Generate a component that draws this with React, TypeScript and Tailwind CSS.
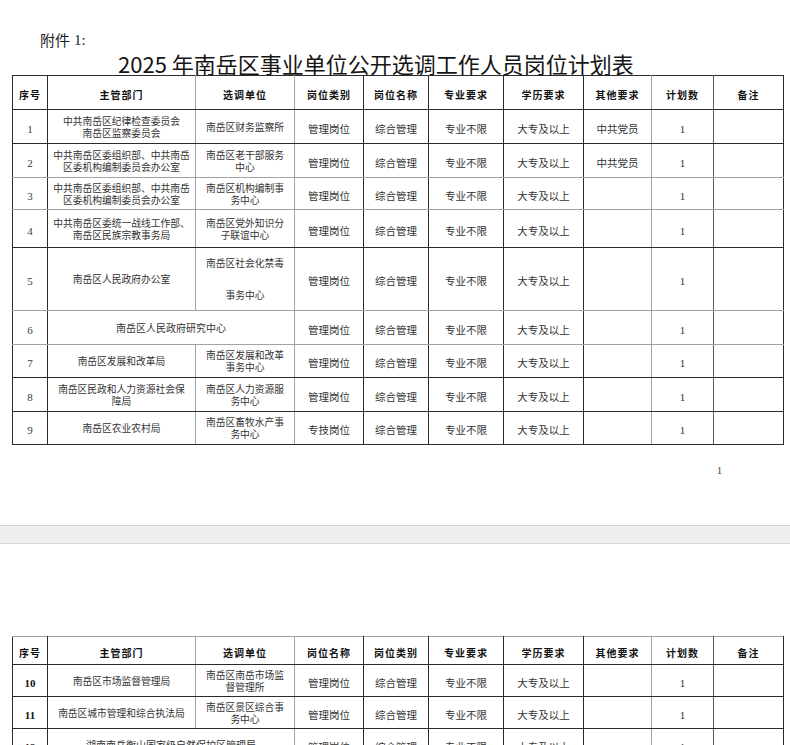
import React from "react";

type C = "d" | "g" | "m";

const RC: Record<C, string> = {
  d: "border-r-[#2b2b2b]",
  g: "border-r-[#a3a3a3]",
  m: "border-r-[#5a5a5a]",
};
const BC: Record<C, string> = {
  d: "border-b-[#2b2b2b]",
  g: "border-b-[#a3a3a3]",
  m: "border-b-[#5a5a5a]",
};
const TC: Record<C, string> = {
  d: "border-t-[#2b2b2b]",
  g: "border-t-[#a3a3a3]",
  m: "border-t-[#5a5a5a]",
};

const colRight: C[] = ["d", "g", "g", "d", "d", "d", "d", "g", "m", "d"];
const widths = [35, 148, 99, 69, 65, 75, 80, 68, 62, 70];

type Row = {
  h: string;
  b: C;
  num: string;
  bold?: boolean;
  dept: React.ReactNode;
  unit?: React.ReactNode;
  rest: string[];
};

const std = (a: string, b: string, other: string): string[] => [a, b, "专业不限", "大专及以上", other, "1", ""];

const rows1: Row[] = [
  { h: "h-[34px]", b: "d", num: "1", dept: <>中共南岳区纪律检查委员会<br />南岳区监察委员会</>, unit: "南岳区财务监察所", rest: std("管理岗位", "综合管理", "中共党员") },
  { h: "h-[34px]", b: "g", num: "2", dept: <>中共南岳区委组织部、中共南岳<br />区委机构编制委员会办公室</>, unit: <>南岳区老干部服务<br />中心</>, rest: std("管理岗位", "综合管理", "中共党员") },
  { h: "h-[32px]", b: "g", num: "3", dept: <>中共南岳区委组织部、中共南岳<br />区委机构编制委员会办公室</>, unit: <>南岳区机构编制事<br />务中心</>, rest: std("管理岗位", "综合管理", "") },
  { h: "h-[38px]", b: "d", num: "4", dept: <>中共南岳区委统一战线工作部、<br />南岳区民族宗教事务局</>, unit: <>南岳区党外知识分<br />子联谊中心</>, rest: std("管理岗位", "综合管理", "") },
  { h: "h-[63px]", b: "g", num: "5", dept: "南岳区人民政府办公室", unit: <div className="flex flex-col items-center gap-[20px]"><span>南岳区社会化禁毒</span><span>事务中心</span></div>, rest: std("管理岗位", "综合管理", "") },
  { h: "h-[34px]", b: "g", num: "6", dept: "南岳区人民政府研究中心", rest: std("管理岗位", "综合管理", "") },
  { h: "h-[33px]", b: "d", num: "7", dept: "南岳区发展和改革局", unit: <>南岳区发展和改革<br />事务中心</>, rest: std("管理岗位", "综合管理", "") },
  { h: "h-[34px]", b: "d", num: "8", dept: <>南岳区民政和人力资源社会保<br />障局</>, unit: <>南岳区人力资源服<br />务中心</>, rest: std("管理岗位", "综合管理", "") },
  { h: "h-[33px]", b: "d", num: "9", dept: "南岳区农业农村局", unit: <>南岳区畜牧水产事<br />务中心</>, rest: std("专技岗位", "综合管理", "") },
];

const rows2: Row[] = [
  { h: "h-[32px]", b: "d", num: "10", bold: true, dept: "南岳区市场监督管理局", unit: <>南岳区南岳市场监<br />督管理所</>, rest: std("管理岗位", "综合管理", "") },
  { h: "h-[32px]", b: "d", num: "11", bold: true, dept: "南岳区城市管理和综合执法局", unit: <>南岳区景区综合事<br />务中心</>, rest: std("管理岗位", "综合管理", "") },
  { h: "h-[32px]", b: "d", num: "12", bold: true, dept: "湖南南岳衡山国家级自然保护区管理局", rest: std("管理岗位", "综合管理", "") },
];

const cjk = "font-['Noto_Sans_CJK_SC',sans-serif]";
const serif = "font-['Liberation_Serif','Noto_Sans_CJK_SC',serif]";

function cellCls(col: number, top: C, bottom: C) {
  return [
    "border border-l-[#2b2b2b] text-center align-middle p-0",
    RC[colRight[col]],
    BC[bottom],
    TC[top],
  ].join(" ");
}

function Table({ headers, rows, top, headH }: { headers: string[]; rows: Row[]; top: C; headH: string }) {
  return (
    <table className="table-fixed border-collapse w-[772px]">
      <colgroup>
        {widths.map((w, i) => (
          <col key={i} style={{ width: w }} />
        ))}
      </colgroup>
      <tbody>
        <tr className={headH}>
          {headers.map((h, i) => (
            <td key={i} className={cellCls(i, top, "d")}>
              <span className={`${cjk} text-[10px] leading-[12px] font-bold text-[#111] tracking-[1px]`}>{h}</span>
            </td>
          ))}
        </tr>
        {rows.map((r, ri) => {
          const prev: C = ri === 0 ? "d" : rows[ri - 1].b;
          return (
            <tr key={ri} className={r.h}>
              <td className={cellCls(0, prev, r.b)}>
                <span className={`${serif} text-[11px] leading-[12px] ${r.bold ? "font-bold text-[#111]" : "text-[#3a3a3a]"}`}>{r.num}</span>
              </td>
              {r.unit === undefined ? (
                <td colSpan={2} className={cellCls(2, prev, r.b)}>
                  <div className={`${cjk} text-[10px] leading-[12px] text-[#333]`}>{r.dept}</div>
                </td>
              ) : (
                <>
                  <td className={cellCls(1, prev, r.b)}>
                    <div className={`${cjk} text-[9.75px] leading-[12px] text-[#333]`}>{r.dept}</div>
                  </td>
                  <td className={cellCls(2, prev, r.b)}>
                    <div className={`${cjk} text-[9.75px] leading-[12px] text-[#333]`}>{r.unit}</div>
                  </td>
                </>
              )}
              {r.rest.map((t, i) => (
                <td key={i} className={cellCls(i + 3, prev, r.b)}>
                  {i === 5 ? (
                    <span className={`${serif} text-[11px] leading-[12px] text-[#333]`}>{t}</span>
                  ) : (
                    <span className={`${cjk} text-[10.5px] leading-[12px] text-[#333]`}>{t}</span>
                  )}
                </td>
              ))}
            </tr>
          );
        })}
      </tbody>
    </table>
  );
}

export default function App() {
  return (
    <div className="w-[790px] h-[745px] overflow-hidden bg-white">
      {/* page 1 */}
      <div className="h-[525px] flex flex-col">
        <div className="pt-[32px] pl-[40px] h-[48px] flex items-center">
          <span className={`${cjk} text-[15px] leading-[16px] text-[#222]`}>附件</span>
          <span className={`${serif} text-[15px] leading-[16px] text-[#222] ml-[4px]`}>1:</span>
        </div>
        <div className="mt-[3px] pl-[118px] h-[24px] flex items-center">
          <span className={`${cjk} text-[22px] leading-[24px] text-[#151515] whitespace-nowrap`}>2025 年南岳区事业单位公开选调工作人员岗位计划表</span>
        </div>
        <div className="pl-[12px]">
          <Table
            headers={["序号", "主管部门", "选调单位", "岗位类别", "岗位名称", "专业要求", "学历要求", "其他要求", "计划数", "备注"]}
            rows={rows1}
            top="d"
            headH="h-[34px]"
          />
        </div>
        <div className="mt-[11px] pl-[717px]">
          <span className={`${serif} text-[10px] leading-[12px] text-[#333]`}>1</span>
        </div>
      </div>
      {/* page gap */}
      <div className="h-[19px] bg-[#efefef] border-t border-b border-t-[#d4d4d4] border-b-[#d8d8d8]" />
      {/* page 2 */}
      <div className="pt-[92px] pl-[12px]">
        <Table
          headers={["序号", "主管部门", "选调单位", "岗位名称", "岗位类别", "专业要求", "学历要求", "其他要求", "计划数", "备注"]}
          rows={rows2}
          top="g"
          headH="h-[28px]"
        />
      </div>
    </div>
  );
}
